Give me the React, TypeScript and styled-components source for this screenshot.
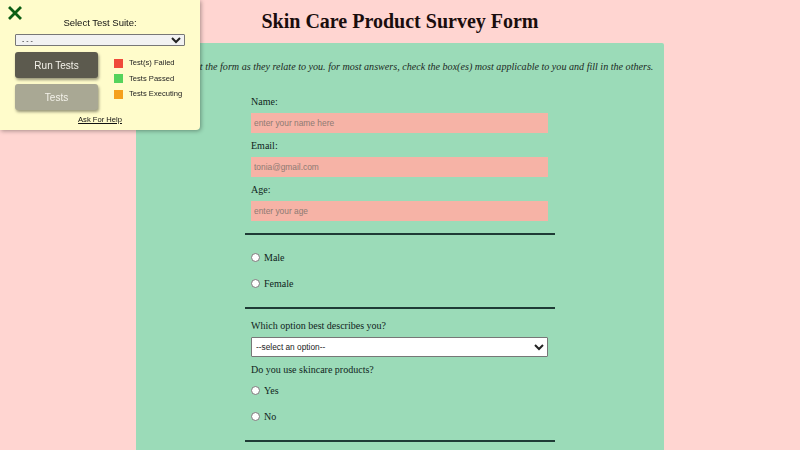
import React from 'react';
import styled, { createGlobalStyle } from 'styled-components';

const GlobalStyle = createGlobalStyle`
  html, body {
    margin: 0;
    padding: 0;
    background-color: #ffd5d1;
    font-family: 'Liberation Serif', 'Times New Roman', serif;
    color: #111;
  }
`;

const Page = styled.div`
  display: flex;
  flex-direction: column;
  align-items: center;
`;

const Title = styled.h1`
  margin: 8px 0 9px;
  height: 26px;
  font-size: 20px;
  line-height: 26px;
  font-weight: bold;
  color: #1a0d0d;
`;

const Card = styled.div`
  width: 528px;
  background-color: #9bdbb8;
  border-radius: 2px 2px 0 0;
  display: flex;
  flex-direction: column;
  align-items: center;
  padding: 17px 0 20px;
`;

const Intro = styled.p`
  margin: 0 0 21px;
  font-style: italic;
  font-size: 10.1px;
  line-height: 14px;
  white-space: nowrap;
  color: #1c2a24;
`;

const Form = styled.form`
  width: 310px;
  display: flex;
  flex-direction: column;
`;

const Label = styled.label`
  display: block;
  padding-left: 6px;
  font-size: 10px;
  line-height: 13px;
  color: #10241c;
  margin-bottom: 5px;
`;

const TextInput = styled.input`
  box-sizing: border-box;
  width: 297px;
  height: 20px;
  margin: 0 0 6px 6px;
  border: none;
  outline: none;
  padding: 0 3px;
  background-color: #f6b3a6;
  font-family: 'Liberation Sans', Arial, sans-serif;
  font-size: 8.4px;
  color: #333;

  &::placeholder {
    color: #8e7a73;
  }
`;

const Rule = styled.hr<{ $top: number; $bottom: number }>`
  width: 310px;
  margin: ${(p) => p.$top}px 0 ${(p) => p.$bottom}px;
  border: none;
  border-top: 2px solid #1f3b36;
`;

const RadioRow = styled.label<{ $top?: number }>`
  display: flex;
  align-items: center;
  gap: 4px;
  padding-left: 6px;
  height: 14px;
  font-size: 10px;
  color: #10241c;
  margin: ${(p) => p.$top ?? 0}px 0 12px;
`;

const Radio = styled.input.attrs({ type: 'radio' })`
  width: 9px;
  height: 9px;
  margin: 1px 0 0;
`;

const Select = styled.select<{ $width: number }>`
  box-sizing: border-box;
  width: ${(p) => p.$width}px;
  background: #fff;
  border: 1px solid #777;
  border-radius: 1px;
  font-family: 'Liberation Sans', Arial, sans-serif;
  color: #222;
`;

const OptionSelect = styled(Select)`
  height: 20px;
  margin: 0 0 5.5px 6px;
  padding: 0;
  font-size: 8.3px;
`;

/* test suite overlay */
const Panel = styled.div`
  position: fixed;
  top: 0;
  left: 0;
  width: 200px;
  height: 130px;
  box-sizing: border-box;
  background-color: #fffccb;
  box-shadow: 1px 1px 4px rgba(0, 0, 0, 0.35);
  border-radius: 0 0 4px 0;
  font-family: 'Liberation Sans', Arial, sans-serif;
  padding: 17px 15px 0;
  display: flex;
  flex-direction: column;
  align-items: center;
`;

const Close = styled.div`
  position: absolute;
  top: 6px;
  left: 8px;
  width: 14px;
  height: 14px;
`;

const PanelTitle = styled.div`
  font-size: 9.5px;
  line-height: 12px;
  color: #111;
  margin-bottom: 5px;
`;

const SuiteSelect = styled(Select)`
  height: 12px;
  font-size: 7px;
  padding: 0 2px;
  background: #f2f2f2;
  margin-bottom: 6px;
`;

const Controls = styled.div`
  width: 170px;
  display: flex;
  gap: 16px;
`;

const Buttons = styled.div`
  display: flex;
  flex-direction: column;
  gap: 6px;
`;

const Button = styled.button<{ $bg: string }>`
  width: 83px;
  height: 26px;
  border: none;
  border-radius: 3px;
  background-color: ${(p) => p.$bg};
  color: #f4f2ea;
  font-family: 'Liberation Sans', Arial, sans-serif;
  font-size: 10px;
  box-shadow: 1px 2px 3px rgba(0, 0, 0, 0.4);
`;

const Legend = styled.div`
  display: flex;
  flex-direction: column;
  gap: 5.5px;
  padding-top: 6px;
`;

const LegendItem = styled.div`
  display: flex;
  align-items: center;
  gap: 6px;
  font-size: 7.6px;
  line-height: 10px;
  white-space: nowrap;
  color: #222;
`;

const Swatch = styled.span<{ $color: string }>`
  width: 9px;
  height: 9px;
  background-color: ${(p) => p.$color};
`;

const HelpLink = styled.a`
  margin-top: 5px;
  font-size: 7.6px;
  color: #111;
  text-decoration: underline;
`;

const TestPanel: React.FC = () => (
  <Panel>
    <Close>
      <svg width="14" height="14" viewBox="0 0 14 14">
        <path d="M2 2 L12 12 M12 2 L2 12" stroke="#0b5e14" strokeWidth="2.8" strokeLinecap="square" />
      </svg>
    </Close>
    <PanelTitle>Select Test Suite:</PanelTitle>
    <SuiteSelect $width={170}>
      <option>- - -</option>
    </SuiteSelect>
    <Controls>
      <Buttons>
        <Button $bg="#5c5a4e">Run Tests</Button>
        <Button $bg="#a9a894">Tests</Button>
      </Buttons>
      <Legend>
        <LegendItem>
          <Swatch $color="#f04a3a" />
          Test(s) Failed
        </LegendItem>
        <LegendItem>
          <Swatch $color="#55d35b" />
          Tests Passed
        </LegendItem>
        <LegendItem>
          <Swatch $color="#f5a01c" />
          Tests Executing
        </LegendItem>
      </Legend>
    </Controls>
    <HelpLink>Ask For Help</HelpLink>
  </Panel>
);

export default function App() {
  return (
    <Page>
      <GlobalStyle />
      <Title>Skin Care Product Survey Form</Title>
      <Card>
        <Intro>
          Please fill out the form as they relate to you. for most answers, check the box(es) most applicable to
          you and fill in the others.
        </Intro>
        <Form>
          <Label>Name:</Label>
          <TextInput placeholder="enter your name here" />
          <Label>Email:</Label>
          <TextInput placeholder="tonia@gmail.com" />
          <Label>Age:</Label>
          <TextInput placeholder="enter your age" />
          <Rule $top={6} $bottom={15} />
          <RadioRow>
            <Radio name="gender" />
            Male
          </RadioRow>
          <RadioRow>
            <Radio name="gender" />
            Female
          </RadioRow>
          <Rule $top={5} $bottom={10} />
          <Label>Which option best describes you?</Label>
          <OptionSelect $width={297}>
            <option>--select an option--</option>
          </OptionSelect>
          <Label>Do you use skincare products?</Label>
          <RadioRow $top={2.5}>
            <Radio name="use" />
            Yes
          </RadioRow>
          <RadioRow>
            <Radio name="use" />
            No
          </RadioRow>
          <Rule $top={5} $bottom={10} />
        </Form>
      </Card>
      <TestPanel />
    </Page>
  );
}
